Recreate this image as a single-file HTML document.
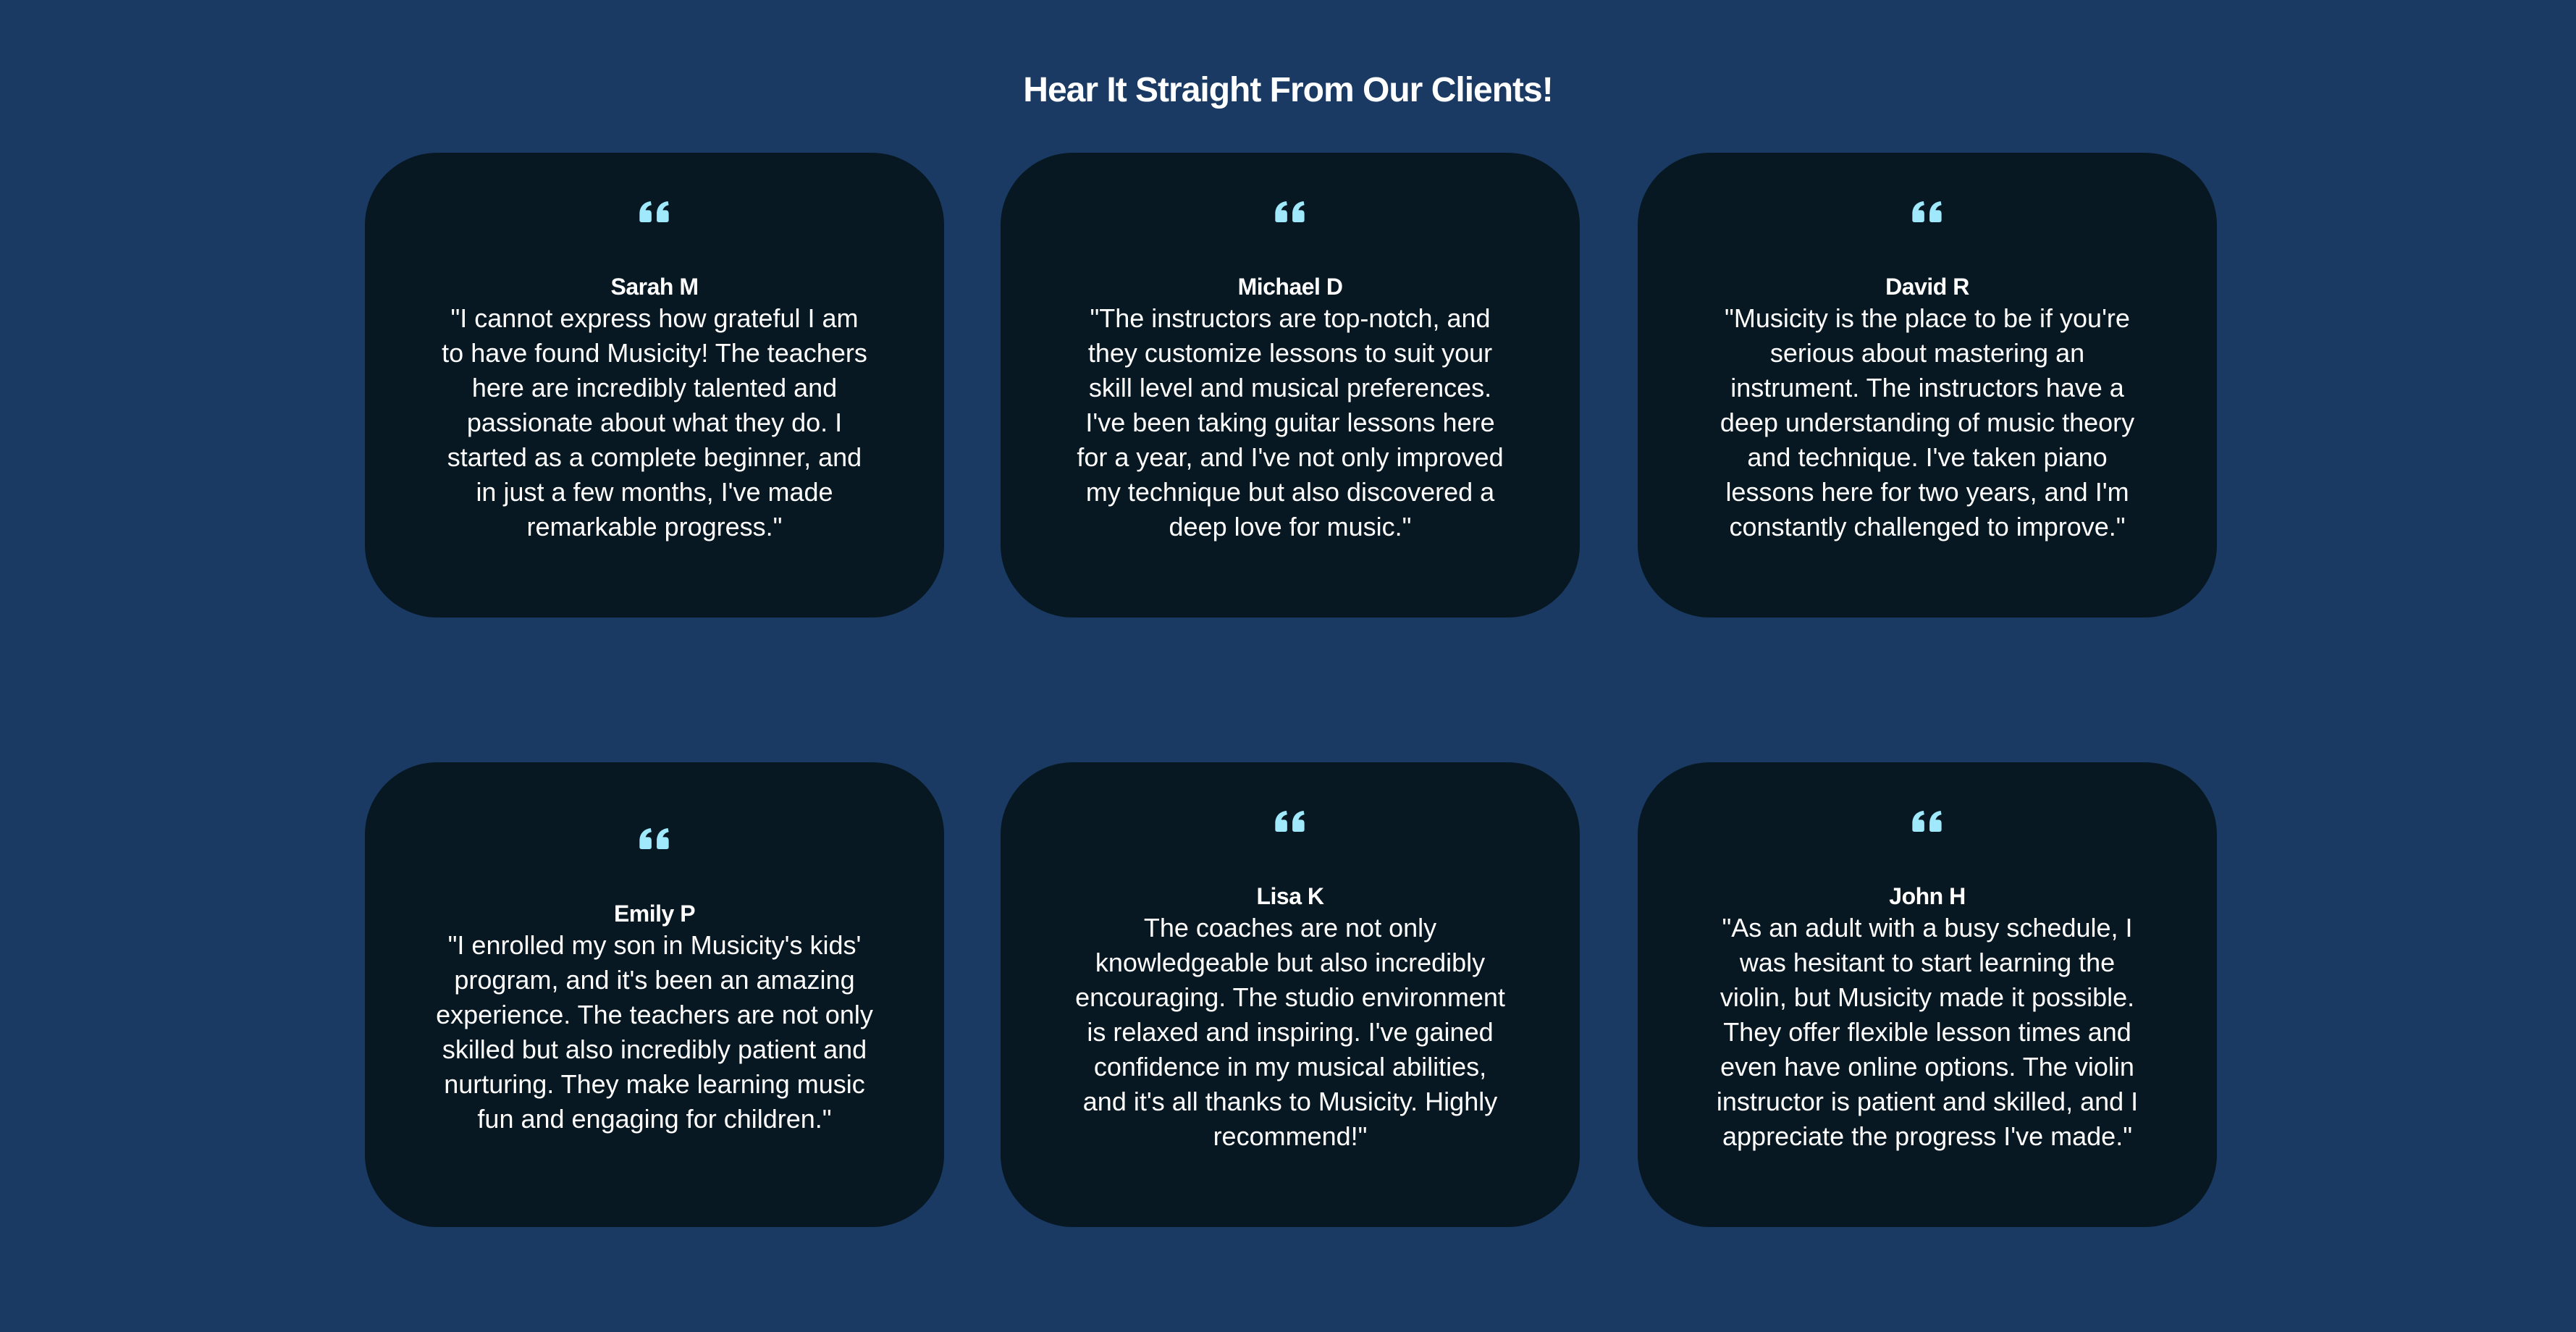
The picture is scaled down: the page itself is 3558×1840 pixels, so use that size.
<!DOCTYPE html>
<html><head><meta charset="utf-8"><style>
html,body{margin:0;padding:0}
body{width:3558px;height:1840px;background:#1a3a63;font-family:"Liberation Sans",sans-serif;color:#fff;position:relative;overflow:hidden}
h1{position:absolute;left:0;right:0;top:97px;margin:0;text-align:center;font-size:48px;font-weight:bold;letter-spacing:-1px}
.card{position:absolute;width:800px;height:642px;box-sizing:border-box;padding-bottom:36px;background:#071822;border-radius:100px;display:flex;flex-direction:column;align-items:center;justify-content:center;text-align:center}
.q{width:46px;height:31px;margin-bottom:68px}
.n{font-weight:bold;font-size:32px;line-height:40px;letter-spacing:-0.5px}
.t{font-size:36px;line-height:48px;width:760px;white-space:nowrap}
</style></head><body>
<h1>Hear It Straight From Our Clients!</h1>
<svg width="0" height="0" style="position:absolute"><defs><g id="qq" fill="#a0e8fb"><path d="M2 18 C2 8 8 2 17 1 L18 6 C13 7 11 10 10 13 L14 13 C17 13 18 15 18 18 L18 26 C18 28 17 29 15 29 L5 29 C3 29 2 28 2 26 Z"/><path d="M25 18 C25 8 31 2 40 1 L41 6 C36 7 34 10 33 13 L37 13 C40 13 41 15 41 18 L41 26 C41 28 40 29 38 29 L28 29 C26 29 25 28 25 26 Z"/></g></defs></svg>

<div class="card" style="left:504px;top:211px"><svg class="q" viewBox="0 0 44 30"><use href="#qq"/></svg><div class="n">Sarah M</div><div class="t">"I cannot express how grateful I am<br>to have found Musicity! The teachers<br>here are incredibly talented and<br>passionate about what they do. I<br>started as a complete beginner, and<br>in just a few months, I've made<br>remarkable progress."</div></div>

<div class="card" style="left:1382px;top:211px"><svg class="q" viewBox="0 0 44 30"><use href="#qq"/></svg><div class="n">Michael D</div><div class="t">"The instructors are top-notch, and<br>they customize lessons to suit your<br>skill level and musical preferences.<br>I've been taking guitar lessons here<br>for a year, and I've not only improved<br>my technique but also discovered a<br>deep love for music."</div></div>

<div class="card" style="left:2262px;top:211px"><svg class="q" viewBox="0 0 44 30"><use href="#qq"/></svg><div class="n">David R</div><div class="t">"Musicity is the place to be if you're<br>serious about mastering an<br>instrument. The instructors have a<br>deep understanding of music theory<br>and technique. I've taken piano<br>lessons here for two years, and I'm<br>constantly challenged to improve."</div></div>

<div class="card" style="left:504px;top:1053px"><svg class="q" viewBox="0 0 44 30"><use href="#qq"/></svg><div class="n">Emily P</div><div class="t">"I enrolled my son in Musicity's kids'<br>program, and it's been an amazing<br>experience. The teachers are not only<br>skilled but also incredibly patient and<br>nurturing. They make learning music<br>fun and engaging for children."</div></div>

<div class="card" style="left:1382px;top:1053px"><svg class="q" viewBox="0 0 44 30"><use href="#qq"/></svg><div class="n">Lisa K</div><div class="t">The coaches are not only<br>knowledgeable but also incredibly<br>encouraging. The studio environment<br>is relaxed and inspiring. I've gained<br>confidence in my musical abilities,<br>and it's all thanks to Musicity. Highly<br>recommend!"</div></div>

<div class="card" style="left:2262px;top:1053px"><svg class="q" viewBox="0 0 44 30"><use href="#qq"/></svg><div class="n">John H</div><div class="t">"As an adult with a busy schedule, I<br>was hesitant to start learning the<br>violin, but Musicity made it possible.<br>They offer flexible lesson times and<br>even have online options. The violin<br>instructor is patient and skilled, and I<br>appreciate the progress I've made."</div></div>
</body></html>
